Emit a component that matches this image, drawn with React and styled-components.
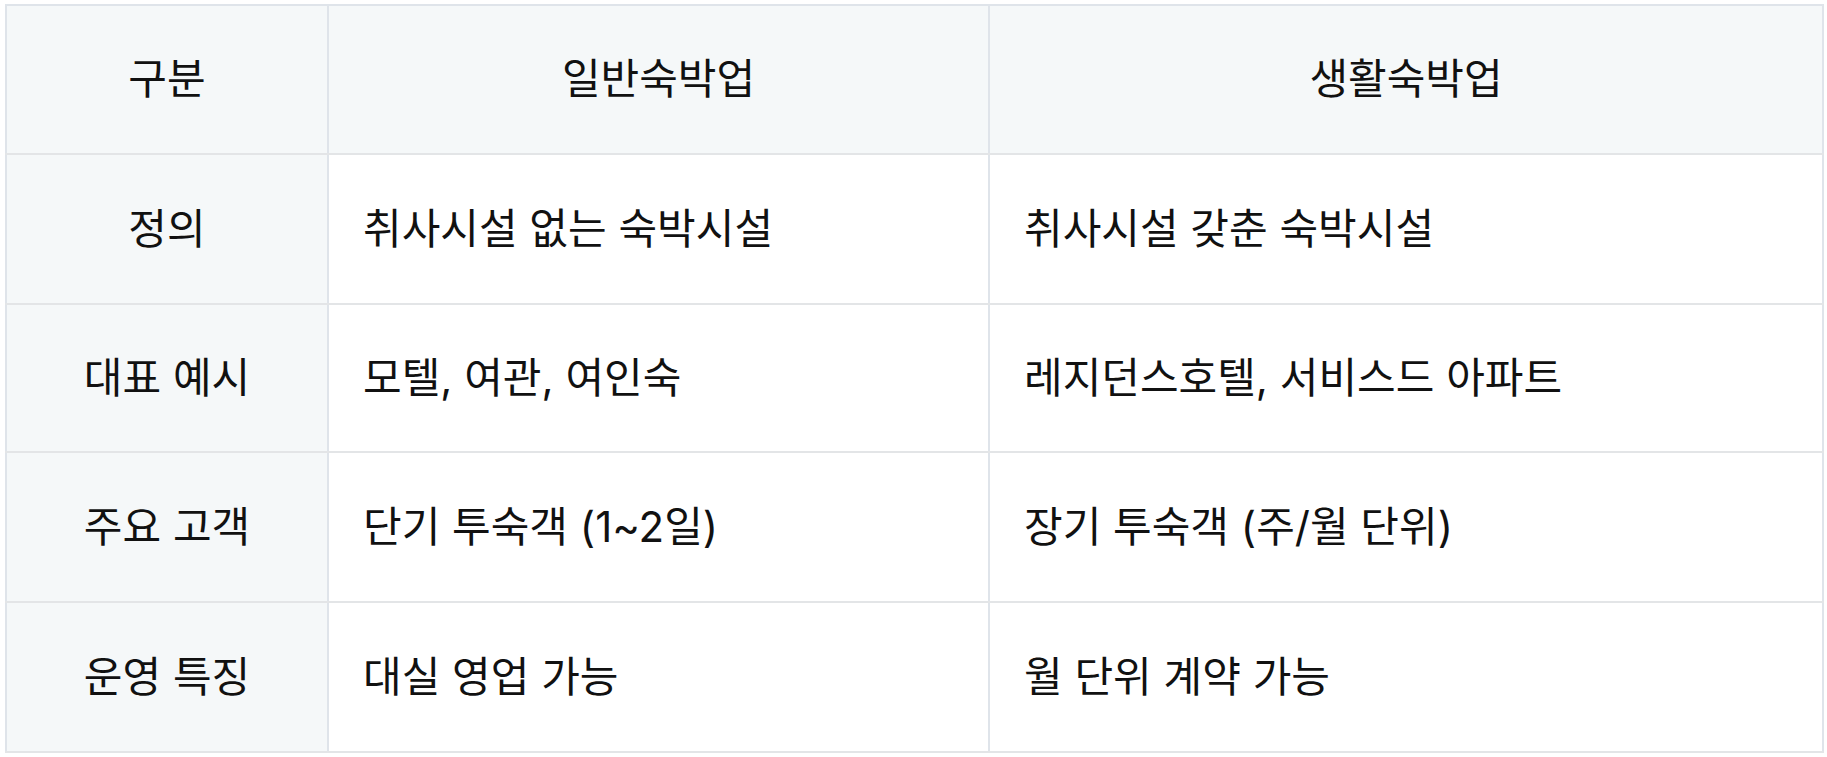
import styled, { createGlobalStyle } from 'styled-components';

const GlobalStyle = createGlobalStyle`
  body {
    margin: 0;
    background: #ffffff;
    font-family: Inter, "Noto Sans CJK KR", "Noto Sans", sans-serif;
  }
`;

const Wrapper = styled.div`
  padding: 4px 3px 0 5px;
`;

const StyledTable = styled.table`
  width: 1819px;
  border-collapse: collapse;
  table-layout: fixed;
  border: 2px solid #dfe4ea;
  color: #111111;
  font-size: 42px;
  line-height: 1.2;
`;

const TableRow = styled.tr`
  height: ${(props) => props.$height || 150}px;
`;

const TableHeader = styled.th`
  background-color: #f5f8f9;
  border: 2px solid #dfe4ea;
  border-bottom-color: #e3e5e7;
  font-weight: 400;
  text-align: center;
  padding: 0;
`;

const LabelCell = styled.td`
  background-color: #f5f8f9;
  border: 2px solid #dfe4ea;
  border-bottom-color: #e3e5e7;
  text-align: center;
  padding: 0;
`;

const TableData = styled.td`
  border: 2px solid #dfe4ea;
  border-bottom-color: #e3e5e7;
  padding: 0 0 0 34px;
  text-align: left;
`;

const rows = [
  { label: '정의', general: '취사시설 없는 숙박시설', living: '취사시설 갖춘 숙박시설' },
  { label: '대표 예시', general: '모텔, 여관, 여인숙', living: '레지던스호텔, 서비스드 아파트', height: 148 },
  { label: '주요 고객', general: '단기 투숙객 (1~2일)', living: '장기 투숙객 (주/월 단위)' },
  { label: '운영 특징', general: '대실 영업 가능', living: '월 단위 계약 가능' },
];

export default function App() {
  return (
    <Wrapper>
      <GlobalStyle />
      <StyledTable>
        <colgroup>
          <col style={{ width: 322 }} />
          <col style={{ width: 661 }} />
          <col />
        </colgroup>
        <thead>
          <TableRow $height={149}>
            <TableHeader>구분</TableHeader>
            <TableHeader>일반숙박업</TableHeader>
            <TableHeader>생활숙박업</TableHeader>
          </TableRow>
        </thead>
        <tbody>
          {rows.map((row) => (
            <TableRow key={row.label} $height={row.height}>
              <LabelCell>{row.label}</LabelCell>
              <TableData>{row.general}</TableData>
              <TableData>{row.living}</TableData>
            </TableRow>
          ))}
        </tbody>
      </StyledTable>
    </Wrapper>
  );
}
